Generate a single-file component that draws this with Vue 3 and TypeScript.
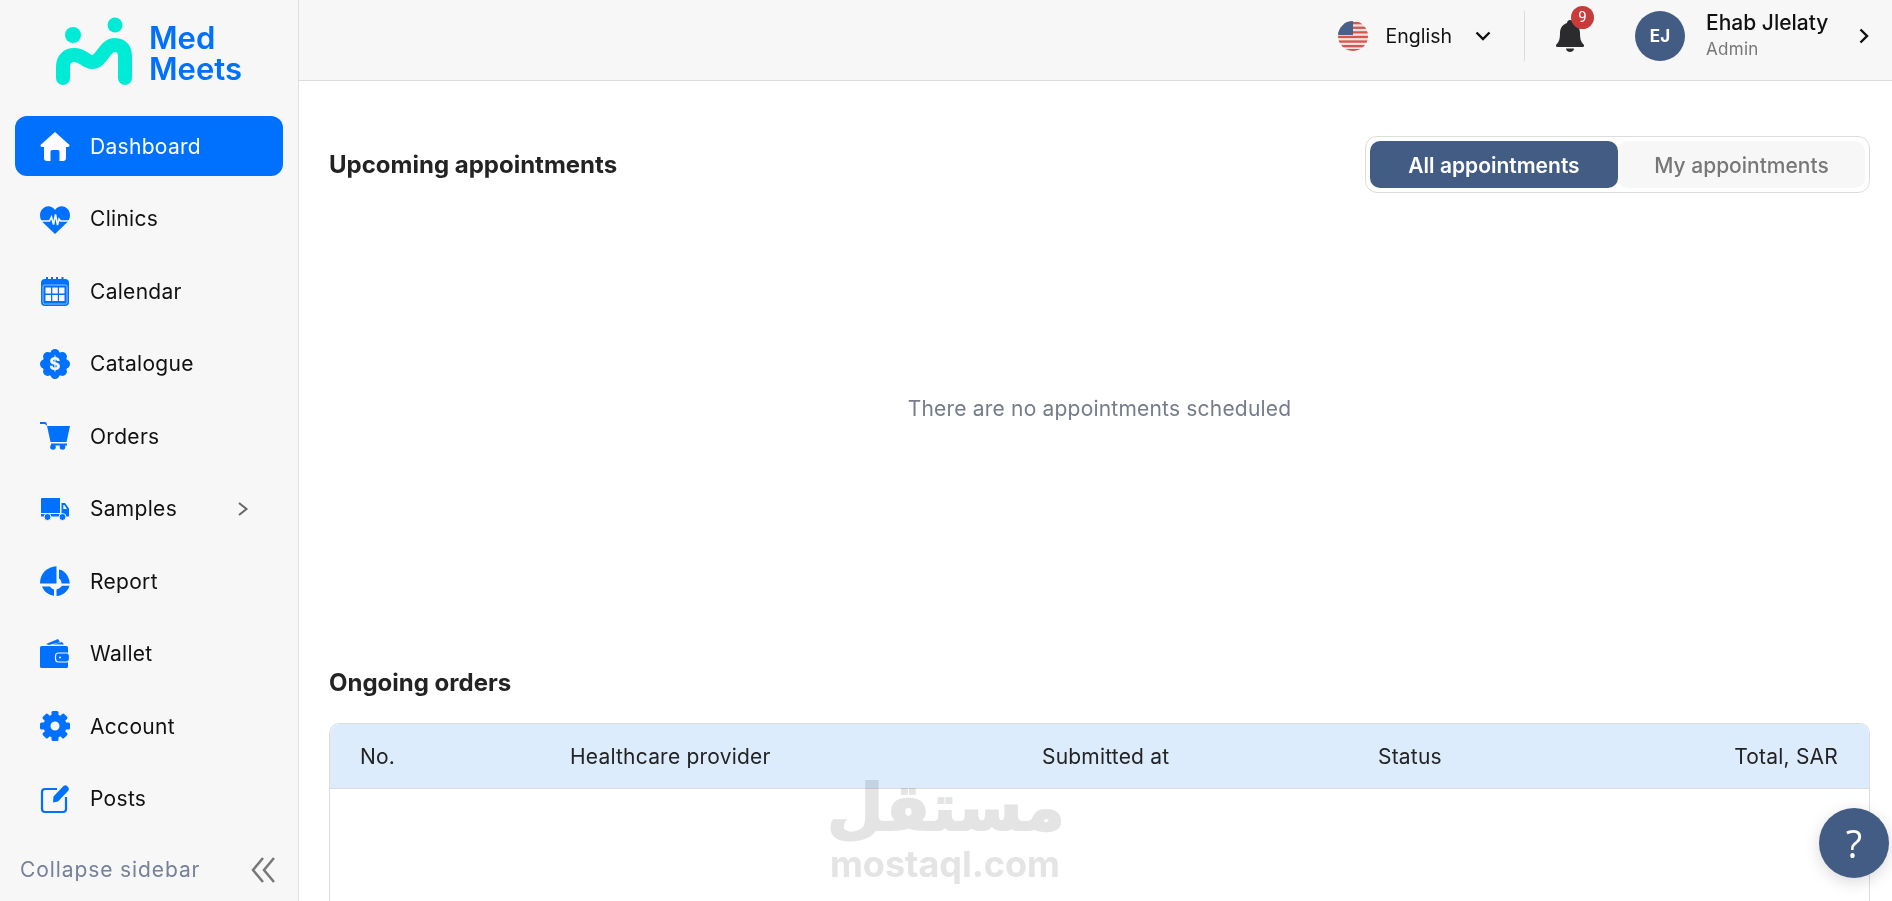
<template>
  <div class="page">
    <aside class="sidebar">
      <div class="logo">
        <svg class="logo-mark" width="80" height="70" viewBox="0 0 80 70">
          <circle cx="17" cy="20" r="8" fill="#00ebd5" />
          <circle cx="59" cy="10" r="7.5" fill="#00ebd5" />
          <path
            d="M7 63V52C7 44 12 40 18 40C28 40 29 47 36 47C46 47 48 30 59 30C66 30 69 35 69 42V63"
            fill="none"
            stroke="#00ebd5"
            stroke-width="14"
            stroke-linecap="round"
          />
        </svg>
        <div class="logo-text">
          <div>Med</div>
          <div>Meets</div>
        </div>
      </div>

      <nav class="nav">
        <a v-for="item in nav" :key="item.label" class="nav-item" :class="{ active: item.active }">
          <svg class="nav-icon" width="30" height="30" viewBox="0 0 30 30">
            <template v-if="item.icon === 'home'">
              <path d="M15 1L29 13.5Q30.5 15.5 28 16H26V27Q26 30 23 30H19.500V21Q19.500 19 18 19H12Q10.500 19 10.500 21V30H7Q4 30 4 27V16H2Q-.5 15.500 1 13.500Z" />
            </template>
            <template v-else-if="item.icon === 'heart'">
              <path d="M15 30L2.500 18C-1 14-.8 7.500 3 4.500C7 1 12 2 15 6C18 2 23 1 27 4.500C30.800 7.500 31 14 27.500 18Z" />
              <path class="pulse" d="M0 17H9.500L11.500 13L13.500 20.500L15.500 10.500L17.500 21L19 15L20.500 17H30" />
            </template>
            <template v-else-if="item.icon === 'calendar'">
              <path d="M6 1h2v4H6zM11 1h2v4h-2zM16 1h2v4h-2zM21.500 1h2v4h-2z" />
              <rect x="1" y="3" width="28" height="27" rx="4" />
              <rect class="cal-line" x="3" y="9" width="24" height="19" rx="1.500" />
              <path class="cal-cells" d="M5.500 11.500h5.500v6H5.500zM12.300 11.500h5.500v6h-5.500zM19 11.500h5.500v6H19zM5.500 19h5.500v6H5.500zM12.300 19h5.500v6h-5.500zM19 19h5.500v6H19z" />
            </template>
            <template v-else-if="item.icon === 'badge'">
              <circle cx="15" cy="15" r="12.500" />
              <circle v-for="b in bumps" :key="b.x" :cx="b.x" :cy="b.y" r="4.500" />
              <text class="dollar" x="15" y="21" text-anchor="middle">$</text>
            </template>
            <template v-else-if="item.icon === 'cart'">
              <path d="M0 1H5Q6 1 6.500 2L7.200 5H30L26.500 21H10.500L7 4.800L4.800 3H0Z" />
              <path d="M11 22.500H27V24.500H11Z" />
              <circle cx="13" cy="26" r="2.800" />
              <circle cx="22.500" cy="26" r="2.800" />
            </template>
            <template v-else-if="item.icon === 'truck'">
              <path d="M2 4H20V19H1V5Q1 4 2 4Z" />
              <path fill-rule="evenodd" d="M21.500 9H25L29 14.500V21H21.500ZM23.300 11V15H27L24.300 11Z" />
              <path d="M1 20H29V22.500H1Z" />
              <circle class="wheel" cx="7.500" cy="23" r="3.500" />
              <circle class="wheel" cx="22.500" cy="23" r="3.500" />
            </template>
            <template v-else-if="item.icon === 'report'">
              <path d="M16.500 .2V17.500H.1C-.5 8 7 .5 16.500 .2Z" />
              <path d="M19 3.500C25 4.500 29 10 29.800 17.500H21.500C21.500 15 20.500 13.500 19 12.500Z" />
              <path d="M2 20.500H10C11 22 12.500 23 14 23.500V29.800C8.500 29 4 25.500 2 20.500Z" />
              <path d="M16.500 23.500C18 23 21 21.500 22 19.700H29.500C28 25 23 29.500 16.500 30Z" />
            </template>
            <template v-else-if="item.icon === 'wallet'">
              <path d="M6 5L18 0L20 3.200L9 6Z" />
              <path d="M13 5.500L22 3L24 5.500Z" />
              <rect y="7" width="28" height="22" rx="1.500" />
              <rect class="clasp" x="15.500" y="14" width="14" height="9" rx="3" />
              <circle class="clasp-dot" cx="20" cy="18.500" r="1" />
            </template>
            <template v-else-if="item.icon === 'gear'">
              <circle class="gear-ring" cx="15" cy="15" r="8" />
              <rect
                v-for="deg in teeth"
                :key="deg"
                x="11.500"
                y="0"
                width="7"
                height="7"
                rx="1.500"
                :transform="`rotate(${deg} 15 15)`"
              />
            </template>
            <template v-else>
              <path class="post-box" d="M17 5H5Q2 5 2 8V25Q2 28 5 28H23Q26 28 26 25V13" />
              <path d="M13 18.500L13.500 12.500L23.500 2Q25.500 .5 27 2L28.500 3.500Q29.500 5.500 28 7L18 17.500Z" />
            </template>
          </svg>
          <span class="nav-label">{{ item.label }}</span>
          <svg v-if="item.arrow" class="nav-arrow" width="12" height="16" viewBox="0 0 12 16">
            <path d="M2 2L9.500 8L2 14" />
          </svg>
        </a>
      </nav>

      <div class="collapse">
        <span>Collapse sidebar</span>
        <svg width="24" height="28" viewBox="0 0 24 28">
          <path d="M12 2L2 14L12 26M23 2L13 14L23 26" />
        </svg>
      </div>
    </aside>

    <div class="body">
      <header class="topbar">
        <div class="lang">
          <svg class="flag" width="30" height="30" viewBox="0 0 30 30">
            <defs>
              <clipPath id="flag-clip"><circle cx="15" cy="15" r="15" /></clipPath>
            </defs>
            <g clip-path="url(#flag-clip)">
              <rect width="30" height="30" fill="#f1e4e0" />
              <rect v-for="s in stripes" :key="s" x="0" :y="s" width="30" height="2.300" fill="#d8554f" />
              <rect width="15" height="14" fill="#47618a" />
            </g>
          </svg>
          <span class="lang-name">English</span>
          <svg class="lang-chev" width="16" height="10" viewBox="0 0 16 10">
            <path class="chev" d="M1.500 1.500L8 8L14.500 1.500" />
          </svg>
        </div>
        <div class="divider"></div>
        <div class="bell">
          <svg width="28" height="32" viewBox="0 0 28 32">
            <path d="M14 0C16 0 17 1.500 17 3C22 4.500 24 9 24 13C24 19 25 22 28 25Q28.500 27 26.500 27H1.500Q-.5 27 0 25C3 22 4 19 4 13C4 9 6 4.500 11 3C11 1.500 12 0 14 0Z" fill="#2b2b2d" />
            <path d="M10 28.500H18C18 30.500 16 32 14 32S10 30.500 10 28.500Z" fill="#2b2b2d" />
          </svg>
          <span class="badge">9</span>
        </div>
        <div class="user">
          <div class="avatar">EJ</div>
          <div class="user-info">
            <div class="user-name">Ehab Jlelaty</div>
            <div class="user-role">Admin</div>
          </div>
          <svg width="10" height="16" viewBox="0 0 10 16">
            <path class="chev" d="M1.500 1.500L8 8L1.500 14.500" />
          </svg>
        </div>
      </header>

      <main class="content">
        <section class="upcoming">
          <div class="section-head">
            <h2>Upcoming appointments</h2>
            <div class="tabs">
              <button class="tab on">All appointments</button>
              <button class="tab">My appointments</button>
            </div>
          </div>
          <p class="empty">There are no appointments scheduled</p>
        </section>

        <section class="orders">
          <h2>Ongoing orders</h2>
          <div class="table">
            <div class="table-head">
              <span v-for="col in columns" :key="col">{{ col }}</span>
            </div>
          </div>
        </section>
      </main>
    </div>

    <div class="watermark">
      <div class="wm-ar">مستقل</div>
      <div class="wm-en">mostaql.com</div>
    </div>

    <button class="help">?</button>
  </div>
</template>

<script setup lang="ts">
interface NavItem {
  label: string
  icon: string
  active?: boolean
  arrow?: boolean
}

const nav: NavItem[] = [
  { label: 'Dashboard', icon: 'home', active: true },
  { label: 'Clinics', icon: 'heart' },
  { label: 'Calendar', icon: 'calendar' },
  { label: 'Catalogue', icon: 'badge' },
  { label: 'Orders', icon: 'cart' },
  { label: 'Samples', icon: 'truck', arrow: true },
  { label: 'Report', icon: 'report' },
  { label: 'Wallet', icon: 'wallet' },
  { label: 'Account', icon: 'gear' },
  { label: 'Posts', icon: 'post' }
]

const columns = ['No.', 'Healthcare provider', 'Submitted at', 'Status', 'Total, SAR']

const stripes = [1, 5.6, 10.2, 14.8, 19.4, 24, 28]

const teeth = [0, 45, 90, 135, 180, 225, 270, 315]

// bumps round the catalogue badge
const bumps = Array.from({ length: 8 }, (_, i) => {
  const a = (i * Math.PI) / 4
  return { x: 15 + Math.cos(a) * 10.5, y: 15 + Math.sin(a) * 10.5 }
})
</script>

<style>
html,
body {
  margin: 0;
  height: 100%;
  overflow: hidden;
  background: #fff;
}
</style>

<style scoped>
.page {
  display: flex;
  height: 901px;
  overflow: hidden;
  position: relative;
  font-family: Inter, "Open Sans", sans-serif;
  color: #111;
}

.sidebar {
  flex-shrink: 0;
  width: 268px;
  background: #f7f7f7;
  border-right: 1px solid #dfdfdf;
  display: flex;
  flex-direction: column;
  padding: 0 15px;
}

.logo {
  display: flex;
  align-items: flex-start;
  height: 116px;
  padding: 15px 0 0 41px;
  box-sizing: border-box;
  gap: 13px;
}

.logo-text {
  font-size: 31px;
  line-height: 31px;
  font-weight: 600;
  color: #0070ff;
  padding-top: 7px;
}

.nav {
  display: flex;
  flex-direction: column;
  gap: 12.55px;
}

.nav-item {
  display: flex;
  align-items: center;
  height: 60px;
  padding-left: 25px;
  border-radius: 12px;
  gap: 20px;
  font-size: 21px;
  letter-spacing: 0.3px;
  fill: #0070ff;
}

.nav-item.active {
  background: #0070ff;
  color: #fff;
  fill: #fff;
}

.nav-icon {
  flex-shrink: 0;
}

.pulse {
  fill: none;
  stroke: #f7f7f7;
  stroke-width: 1.6;
}

.cal-line {
  fill: none;
  stroke: #f7f7f7;
  stroke-width: 0.6;
}

.cal-cells {
  fill: #f7f7f7;
}

.dollar {
  fill: #f7f7f7;
  font-size: 17px;
  font-weight: 800;
}

.wheel {
  stroke: #f7f7f7;
  stroke-width: 1;
}

.clasp {
  stroke: #f7f7f7;
  stroke-width: 1.2;
}

.clasp-dot {
  fill: #f7f7f7;
}

.gear-ring {
  fill: none;
  stroke: #0070ff;
  stroke-width: 7;
}

.post-box {
  fill: none;
  stroke: #0070ff;
  stroke-width: 2.2;
}

.nav-arrow {
  margin-left: auto;
  margin-right: 34px;
}

.nav-arrow path {
  fill: none;
  stroke: #666;
  stroke-width: 2;
}

.collapse {
  display: flex;
  align-items: center;
  justify-content: space-between;
  margin-top: 27px;
  padding: 0 8px 0 5px;
  font-size: 21px;
  letter-spacing: 0.9px;
  color: #76809a;
}

.collapse path {
  fill: none;
  stroke: #777;
  stroke-width: 2.5;
}

.body {
  flex: 1;
  min-width: 0;
  display: flex;
  flex-direction: column;
}

.topbar {
  height: 81px;
  flex-shrink: 0;
  box-sizing: border-box;
  background: #f7f7f7;
  border-bottom: 1px solid #dcdcdc;
  display: flex;
  align-items: center;
  justify-content: flex-end;
  padding: 0 23px 8px 0;
}

.lang {
  display: flex;
  align-items: center;
  gap: 17px;
  font-size: 19.500px;
}

.flag {
  margin-right: 1px;
}

.lang-chev {
  margin-left: 6px;
}

.chev {
  fill: none;
  stroke: #111;
  stroke-width: 2.4;
}

.divider {
  width: 1px;
  height: 50px;
  background: #dcdcdc;
  margin: 0 31px 0 33px;
}

.bell {
  position: relative;
  width: 28px;
  height: 32px;
}

.badge {
  position: absolute;
  top: -14px;
  left: 15px;
  width: 23px;
  height: 23px;
  border-radius: 50%;
  background: #c93a3a;
  color: #fff;
  font-size: 15px;
  text-align: center;
  line-height: 23px;
  font-family: Roboto, sans-serif;
}

.user {
  display: flex;
  align-items: center;
  margin-left: 51px;
}

.avatar {
  width: 50px;
  height: 50px;
  border-radius: 50%;
  background: #425c83;
  color: #fff;
  display: flex;
  align-items: center;
  justify-content: center;
  font-size: 17px;
  font-weight: 700;
}

.user-info {
  margin-left: 21px;
  margin-right: 32px;
  width: 121px;
}

.user-name {
  font-size: 21px;
  line-height: 26px;
  font-weight: 500;
  white-space: nowrap;
}

.user-role {
  font-size: 17px;
  line-height: 26px;
  letter-spacing: 0.3px;
  color: #777;
}

.content {
  flex: 1;
  padding: 0 22px 0 30px;
  display: flex;
  flex-direction: column;
}

.upcoming {
  height: 587px;
}

.section-head {
  display: flex;
  align-items: center;
  justify-content: space-between;
  padding-top: 55px;
}

h2 {
  margin: 0;
  font-size: 24px;
  font-weight: 700;
  color: #232323;
}

.tabs {
  display: flex;
  padding: 4px;
  border: 1px solid #dcdcdc;
  border-radius: 12px;
}

.tab {
  width: 247px;
  height: 47px;
  padding: 2px 0 0;
  border: none;
  border-radius: 10px;
  background: #f7f7f7;
  color: #777;
  font-family: inherit;
  font-size: 21px;
  font-weight: 500;
}

.tab.on {
  width: 248px;
  background: #425c83;
  color: #fff;
  font-weight: 600;
}

.empty {
  margin: 203px 0 0;
  text-align: center;
  font-size: 21px;
  letter-spacing: 0.2px;
  color: #767c8c;
}

.orders h2 {
  margin-bottom: 26px;
}

.table {
  border: 1px solid #dcdcdc;
  border-bottom: none;
  border-radius: 10px 10px 0 0;
  height: 300px;
}

.table-head {
  display: grid;
  grid-template-columns: 210px 472px 336px 1fr auto;
  align-items: center;
  box-sizing: border-box;
  height: 65px;
  padding: 0 31px 0 30px;
  background: #dcecfd;
  border-bottom: 1px solid #dcdcdc;
  border-radius: 10px 10px 0 0;
  font-size: 21px;
  letter-spacing: 0.2px;
  color: #232323;
}

.watermark {
  position: absolute;
  left: 827px;
  top: 770px;
  width: 236px;
  text-align: center;
  pointer-events: none;
  color: #e4e4e4;
  mix-blend-mode: multiply;
  font-weight: 700;
}

.wm-ar {
  font-family: "DejaVu Sans", sans-serif;
  font-size: 65px;
  line-height: 76px;
  -webkit-text-stroke: 2px #e4e4e4;
}

.wm-en {
  font-size: 36px;
  line-height: 36px;
}

.help {
  position: absolute;
  left: 1819px;
  top: 808px;
  width: 70px;
  height: 70px;
  border: none;
  border-radius: 50%;
  background: #425c83;
  color: #fff;
  font-family: "Open Sans", sans-serif;
  font-size: 38px;
  box-shadow: 0 4px 16px rgba(0, 0, 0, 0.15);
}
</style>
